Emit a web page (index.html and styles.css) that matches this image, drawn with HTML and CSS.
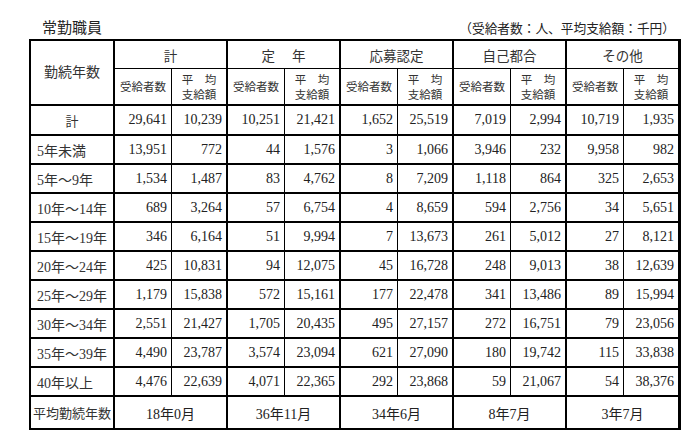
FILE: index.html
```html
<!DOCTYPE html>
<html lang="ja">
<head>
<meta charset="utf-8">
<title>常勤職員</title>
<link rel="stylesheet" href="styles.css">
</head>
<body>
<div class="page">
  <div class="top">
    <div class="title">常勤職員</div>
    <div class="unit">（受給者数：人、平均支給額：千円）</div>
  </div>
  <table class="tbl">
    <colgroup>
      <col class="c0">
      <col class="ca"><col class="cb">
      <col class="ca"><col class="cb">
      <col class="ca"><col class="cb">
      <col class="ca"><col class="cb">
      <col class="ca"><col class="cl">
    </colgroup>
    <thead>
      <tr class="h1">
        <th rowspan="2" class="lab">勤続年数</th>
        <th colspan="2" class="g">計</th>
        <th colspan="2" class="g">定<span class="gap"></span>年</th>
        <th colspan="2" class="g">応募認定</th>
        <th colspan="2" class="g">自己都合</th>
        <th colspan="2" class="g last">その他</th>
      </tr>
      <tr class="h2">
        <th class="s">受給者数</th><th class="s g">平　均<br>支給額</th>
        <th class="s">受給者数</th><th class="s g">平　均<br>支給額</th>
        <th class="s">受給者数</th><th class="s g">平　均<br>支給額</th>
        <th class="s">受給者数</th><th class="s g">平　均<br>支給額</th>
        <th class="s">受給者数</th><th class="s g last">平　均<br>支給額</th>
      </tr>
    </thead>
    <tbody>
      <tr class="r total">
        <th class="rl center">計</th>
        <td>29,641</td><td class="g">10,239</td>
        <td>10,251</td><td class="g">21,421</td>
        <td>1,652</td><td class="g">25,519</td>
        <td>7,019</td><td class="g">2,994</td>
        <td>10,719</td><td class="g last">1,935</td>
      </tr>
      <tr class="r">
        <th class="rl">5年未満</th>
        <td>13,951</td><td class="g">772</td>
        <td>44</td><td class="g">1,576</td>
        <td>3</td><td class="g">1,066</td>
        <td>3,946</td><td class="g">232</td>
        <td>9,958</td><td class="g last">982</td>
      </tr>
      <tr class="r">
        <th class="rl">5年～9年</th>
        <td>1,534</td><td class="g">1,487</td>
        <td>83</td><td class="g">4,762</td>
        <td>8</td><td class="g">7,209</td>
        <td>1,118</td><td class="g">864</td>
        <td>325</td><td class="g last">2,653</td>
      </tr>
      <tr class="r">
        <th class="rl">10年～14年</th>
        <td>689</td><td class="g">3,264</td>
        <td>57</td><td class="g">6,754</td>
        <td>4</td><td class="g">8,659</td>
        <td>594</td><td class="g">2,756</td>
        <td>34</td><td class="g last">5,651</td>
      </tr>
      <tr class="r">
        <th class="rl">15年～19年</th>
        <td>346</td><td class="g">6,164</td>
        <td>51</td><td class="g">9,994</td>
        <td>7</td><td class="g">13,673</td>
        <td>261</td><td class="g">5,012</td>
        <td>27</td><td class="g last">8,121</td>
      </tr>
      <tr class="r">
        <th class="rl">20年～24年</th>
        <td>425</td><td class="g">10,831</td>
        <td>94</td><td class="g">12,075</td>
        <td>45</td><td class="g">16,728</td>
        <td>248</td><td class="g">9,013</td>
        <td>38</td><td class="g last">12,639</td>
      </tr>
      <tr class="r">
        <th class="rl">25年～29年</th>
        <td>1,179</td><td class="g">15,838</td>
        <td>572</td><td class="g">15,161</td>
        <td>177</td><td class="g">22,478</td>
        <td>341</td><td class="g">13,486</td>
        <td>89</td><td class="g last">15,994</td>
      </tr>
      <tr class="r">
        <th class="rl">30年～34年</th>
        <td>2,551</td><td class="g">21,427</td>
        <td>1,705</td><td class="g">20,435</td>
        <td>495</td><td class="g">27,157</td>
        <td>272</td><td class="g">16,751</td>
        <td>79</td><td class="g last">23,056</td>
      </tr>
      <tr class="r">
        <th class="rl">35年～39年</th>
        <td>4,490</td><td class="g">23,787</td>
        <td>3,574</td><td class="g">23,094</td>
        <td>621</td><td class="g">27,090</td>
        <td>180</td><td class="g">19,742</td>
        <td>115</td><td class="g last">33,838</td>
      </tr>
      <tr class="r">
        <th class="rl">40年以上</th>
        <td>4,476</td><td class="g">22,639</td>
        <td>4,071</td><td class="g">22,365</td>
        <td>292</td><td class="g">23,868</td>
        <td>59</td><td class="g">21,067</td>
        <td>54</td><td class="g last">38,376</td>
      </tr>
      <tr class="foot">
        <th class="fl">平均勤続年数</th>
        <td colspan="2" class="g c">18年0月</td>
        <td colspan="2" class="g c">36年11月</td>
        <td colspan="2" class="g c">34年6月</td>
        <td colspan="2" class="g c">8年7月</td>
        <td colspan="2" class="g c last">3年7月</td>
      </tr>
    </tbody>
  </table>
</div>
</body>
</html>
```

FILE: styles.css
```css
html, body {
  margin: 0;
  padding: 0;
  background: #ffffff;
}

body {
  font-family: "Liberation Serif", "Noto Sans CJK JP", serif;
  color: #222222;
}

.page {
  padding-left: 29px;
}

.top {
  width: 652px;
  height: 39px;
  box-sizing: border-box;
  display: flex;
  justify-content: space-between;
  align-items: flex-end;
  padding: 0 6px 4px 13px;
}

.title {
  font-family: "Noto Sans CJK JP", sans-serif;
  font-size: 15px;
  line-height: 16px;
  color: #222;
}

.unit {
  font-family: "Noto Sans CJK JP", sans-serif;
  font-size: 12.7px;
  line-height: 14px;
  color: #222;
}

.tbl {
  border-collapse: separate;
  border-spacing: 0;
  table-layout: fixed;
  width: 652px;
  border-top: 2px solid #000;
  border-left: 2px solid #000;
}

.c0 { width: 84px; }
.ca { width: 57px; }
.cb { width: 56px; }
.cl { width: 57px; }

.tbl th,
.tbl td {
  box-sizing: border-box;
  padding: 0;
  border-right: 1px solid #000;
  border-bottom: 2px solid #000;
  font-weight: normal;
  vertical-align: middle;
  white-space: nowrap;
}

.tbl .g { border-right-width: 2px; }
.tbl .last { border-right-width: 3px; }

.tbl .lab {
  border-right-width: 2px;
  font-family: "Noto Sans CJK JP", sans-serif;
  font-size: 14px;
  text-align: center;
  padding-bottom: 4px;
  color: #333;
}

.h1 { height: 28px; }
.h1 th.g {
  border-bottom-width: 1px;
  font-family: "Noto Sans CJK JP", sans-serif;
  font-size: 13.5px;
  text-align: center;
  color: #333;
}

.gap {
  display: inline-block;
  width: 17px;
}

.h2 { height: 37px; }
.h2 th.s {
  font-family: "Noto Sans CJK JP", sans-serif;
  font-size: 11.5px;
  line-height: 15px;
  text-align: center;
  color: #333;
}

.r { height: 29px; }
.r.total { height: 30px; }

.r td {
  font-size: 14px;
  text-align: right;
  padding-right: 4px;
}

.rl {
  border-right-width: 2px !important;
  font-family: "Liberation Serif", "Noto Sans CJK JP", serif;
  font-size: 14px;
  text-align: left;
  padding-left: 6px !important;
  color: #333;
}

.rl.center {
  text-align: center;
  padding-left: 0 !important;
  font-family: "Noto Sans CJK JP", sans-serif;
  font-size: 13px;
}

.foot { height: 33px; }

.fl {
  border-right-width: 2px !important;
  font-family: "Noto Sans CJK JP", sans-serif;
  font-size: 13px;
  text-align: left;
  padding-left: 2px !important;
  color: #333;
}

.foot td.c {
  font-size: 14px;
  text-align: center;
}
```
